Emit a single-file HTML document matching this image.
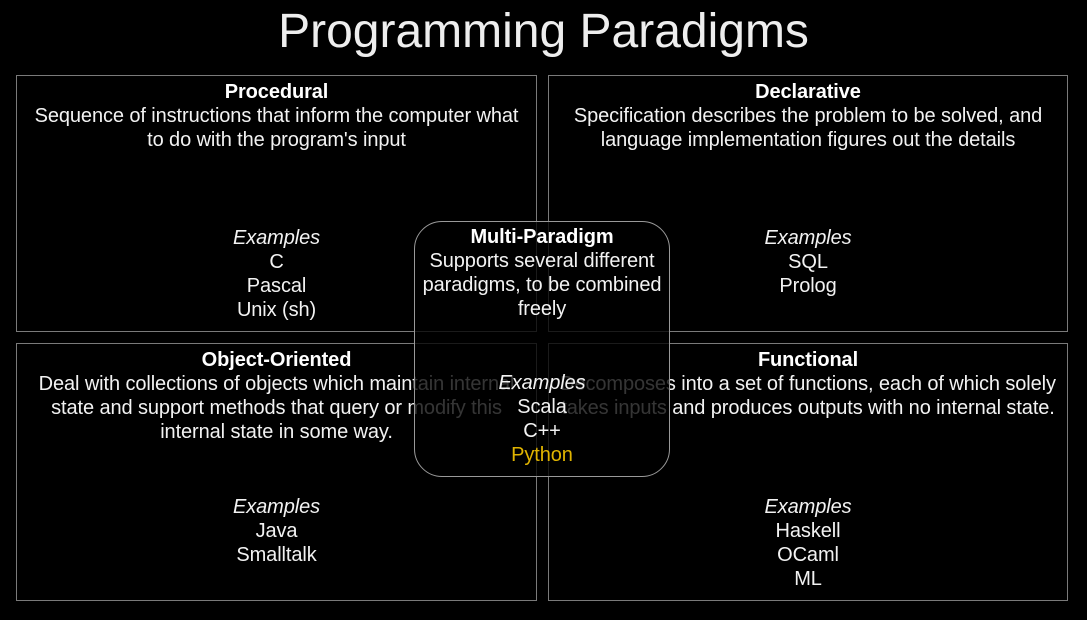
<!DOCTYPE html>
<html><head><meta charset="utf-8"><style>
html,body{margin:0;padding:0;background:#000;width:1087px;height:620px;overflow:hidden;position:relative;font-family:"Liberation Sans",sans-serif;color:#f2f2f2}
.title{position:absolute;left:0;width:1087px;top:1px;text-align:center;font-size:48px;line-height:62px;font-weight:300;color:#eee}
.box{position:absolute;border:1.5px solid #7a7a7a;box-sizing:border-box}
.t{position:absolute;left:0;right:0;text-align:center;font-size:20px;line-height:24px;letter-spacing:-0.1px}
.b{font-weight:bold;color:#fff}
i{font-style:italic}
.mp{position:absolute;left:414px;top:221px;width:256px;height:256px;border:1.5px solid #999;border-radius:28px;background:rgba(0,0,0,0.78);box-sizing:border-box}
</style></head><body>
<div class="title">Programming Paradigms</div>

<div class="box" style="left:16px;top:75px;width:521px;height:257px"></div>
<div class="t" style="left:16px;width:521px;top:80px"><span class="b">Procedural</span><br>Sequence of instructions that inform the computer what<br>to do with the program's input</div>
<div class="t" style="left:16px;width:521px;top:226px"><i>Examples</i><br>C<br>Pascal<br>Unix (sh)</div>

<div class="box" style="left:548px;top:75px;width:520px;height:257px"></div>
<div class="t" style="left:548px;width:520px;top:80px"><span class="b">Declarative</span><br>Specification describes the problem to be solved, and<br>language implementation figures out the details</div>
<div class="t" style="left:548px;width:520px;top:226px"><i>Examples</i><br>SQL<br>Prolog</div>

<div class="box" style="left:16px;top:343px;width:521px;height:258px"></div>
<div class="t" style="left:16px;width:521px;top:348px"><span class="b">Object-Oriented</span><br>Deal with collections of objects which maintain internal<br>state and support methods that query or modify this<br>internal state in some way.</div>
<div class="t" style="left:16px;width:521px;top:495px"><i>Examples</i><br>Java<br>Smalltalk</div>

<div class="box" style="left:548px;top:343px;width:520px;height:258px"></div>
<div class="t" style="left:548px;width:520px;top:348px"><span class="b">Functional</span><br>Decomposes into a set of functions, each of which solely<br>takes inputs and produces outputs with no internal state.</div>
<div class="t" style="left:548px;width:520px;top:495px"><i>Examples</i><br>Haskell<br>OCaml<br>ML</div>

<div class="mp"></div>
<div class="t" style="left:414px;width:256px;top:225px"><span class="b">Multi-Paradigm</span><br>Supports several different<br>paradigms, to be combined<br>freely</div>
<div class="t" style="left:414px;width:256px;top:371px"><i>Examples</i><br>Scala<br>C++<br><span style="color:#e0b400">Python</span></div>
</body></html>
